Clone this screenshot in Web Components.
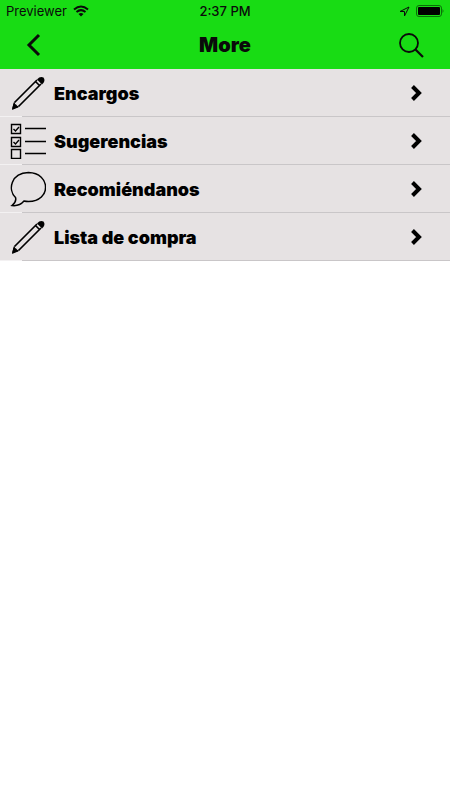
<!DOCTYPE html>
<html lang="es">
<head>
<meta charset="utf-8">
<meta name="viewport" content="width=device-width, initial-scale=1">
<title>More</title>
<style>
  body {
    margin: 0;
    background-color: #ffffff;
    font-family: Inter, "Open Sans", sans-serif;
    color: #0a0a0a;
  }
</style>
</head>
<body>
<more-page>
  <menu-row icon="pencil" href="#encargos">Encargos</menu-row>
  <menu-row icon="checklist" href="#sugerencias">Sugerencias</menu-row>
  <menu-row icon="bubble" href="#recomiendanos">Recomiéndanos</menu-row>
  <menu-row icon="pencil" href="#lista">Lista de compra</menu-row>
</more-page>

<script>
const icons = {
  pencil: `
    <path d="M4.500 27.500L27 5M31 9L8.500 31.500M25.500 6.500L29.500 10.500" stroke-width="1.700"/>
    <path d="M4.500 27.500L3 33L8.500 31.500" stroke-width="1.400"/>
    <path d="M2 35L3.500 28.500Q7 29 8 32.500Z" fill="currentColor" stroke="none"/>
    <path d="M27 4.500Q30 1 33.500 2.500Q36 6 32 9.500Z" fill="currentColor" stroke="none"/>`,
  checklist: `
    <path d="M1.500 1.500H10.500V10.500H1.500ZM1.500 14.500H10.500V23.500H1.500ZM1.500 26.500H10.500V35.500H1.500Z" stroke-width="1.400"/>
    <path d="M3.500 6L5.500 8L9 4M3.500 19L5.500 21L9 17" stroke-width="1.400"/>
    <path d="M15 5.500H36M15 18.500H36M15 30.500H36" stroke-width="1.400"/>`,
  bubble: `
    <path d="M5.500 26.500C-2.500 18.500 1 2 18.500 1.500C41 2 41.500 30.500 18.500 30.500Q16 30.500 14 30C11 33.500 6 35 2 34.500C5 32 6.500 29.500 5.500 26.500Z" stroke-width="1.500"/>`
};

class StatusBar extends HTMLElement {
  constructor() {
    super();
    this.attachShadow({ mode: 'open' });
    this.shadowRoot.innerHTML = `
      <style>
        :host {
          display: grid;
          grid-template-columns: 1fr auto 1fr;
          align-items: center;
          height: 22px;
          padding: 0 6px;
          font: 13px Inter, sans-serif;
        }
        div { display: flex; align-items: center; gap: 6px; }
        .right { justify-content: flex-end; }
        .time { font-weight: 500; }
        svg { display: block; }
      </style>
      <div>
        <span>Previewer</span>
        <svg width="16" height="12" viewBox="0 0 16 12" fill="none" stroke="currentColor" stroke-width="2" aria-hidden="true">
          <path d="M1 4.500Q8 -1.500 15 4.500M3.500 7Q8 3.200 12.500 7"/>
          <path d="M5.500 9Q8 7 10.500 9L8 11.500Z" fill="currentColor" stroke="none"/>
        </svg>
      </div>
      <span class="time">2:37 PM</span>
      <div class="right">
        <svg width="11" height="11" viewBox="0 0 11 11" fill="none" stroke="currentColor" aria-hidden="true">
          <path d="M10 1L1 5.500H5.500V10Z"/>
        </svg>
        <svg width="28" height="12" viewBox="0 0 28 12" aria-hidden="true">
          <rect x="0.500" y="0.500" width="25" height="11" rx="2.500" fill="none" stroke="#0a7008"/>
          <rect x="2" y="2" width="22" height="8" rx="1" fill="#000000"/>
          <path d="M26.500 4Q28.500 6 26.500 8Z" fill="#0a7008"/>
        </svg>
      </div>
    `;
  }
}

class NavBar extends HTMLElement {
  constructor() {
    super();
    this.attachShadow({ mode: 'open' });
    this.shadowRoot.innerHTML = `
      <style>
        :host {
          display: grid;
          grid-template-columns: 1fr auto 1fr;
          align-items: center;
          height: 46px;
          padding: 0 24px;
        }
        h1 { margin: 0; font-size: 20px; font-weight: 900; line-height: 24px; }
        button {
          padding: 0;
          border: none;
          background: none;
          color: inherit;
          cursor: pointer;
        }
        .search { justify-self: end; }
        .back { justify-self: start; }
        svg { display: block; }
      </style>
      <button class="back" type="button" aria-label="Back">
        <svg width="20" height="24" viewBox="0 0 20 24" fill="none" stroke="currentColor" stroke-width="3">
          <path d="M15 2L5 12L15 22"/>
        </svg>
      </button>
      <h1><slot></slot></h1>
      <button class="search" type="button" aria-label="Search">
        <svg width="28" height="26" viewBox="0 0 28 26" fill="none" stroke="currentColor" stroke-width="1.800">
          <circle cx="11" cy="11" r="9"/>
          <path d="M17.500 17.500L25 25" stroke-width="2.200"/>
        </svg>
      </button>
    `;
  }
}

class MenuRow extends HTMLElement {
  constructor() {
    super();
    this.attachShadow({ mode: 'open' });
  }

  connectedCallback() {
    this.shadowRoot.innerHTML = `
      <style>
        :host {
          display: block;
          background: linear-gradient(to right, #f3f1f2 22px, #c9c6c8 22px) bottom / 100% 1px no-repeat #e6e2e3;
        }
        a {
          display: flex;
          align-items: center;
          gap: 8px;
          height: 48px;
          padding: 0 26px 0 10px;
          color: #000000;
          font-size: 18px;
          font-weight: 900;
          line-height: 24px;
          text-decoration: none;
        }
        svg { display: block; flex: none; }
        span { flex: 1; padding-top: 2px; }
      </style>
      <a href="${this.getAttribute('href')}">
        <svg width="36" height="36" viewBox="0 0 36 36" fill="none" stroke="currentColor" aria-hidden="true">${icons[this.getAttribute('icon')]}</svg>
        <span><slot></slot></span>
        <svg width="14" height="18" viewBox="0 0 14 18" fill="none" stroke="currentColor" stroke-width="4" aria-hidden="true">
          <path d="M2.500 2.500L9 9L2.500 15.500"/>
        </svg>
      </a>
    `;
  }
}

class MorePage extends HTMLElement {
  constructor() {
    super();
    this.attachShadow({ mode: 'open' });
    this.shadowRoot.innerHTML = `
      <style>
        :host { display: block; }
        header { padding-bottom: 1px; background-color: #18dc14; }
      </style>
      <header>
        <status-bar></status-bar>
        <nav-bar>More</nav-bar>
      </header>
      <nav aria-label="More"><slot></slot></nav>
    `;
  }
}

customElements.define('status-bar', StatusBar);
customElements.define('nav-bar', NavBar);
customElements.define('menu-row', MenuRow);
customElements.define('more-page', MorePage);
</script>
</body>
</html>
